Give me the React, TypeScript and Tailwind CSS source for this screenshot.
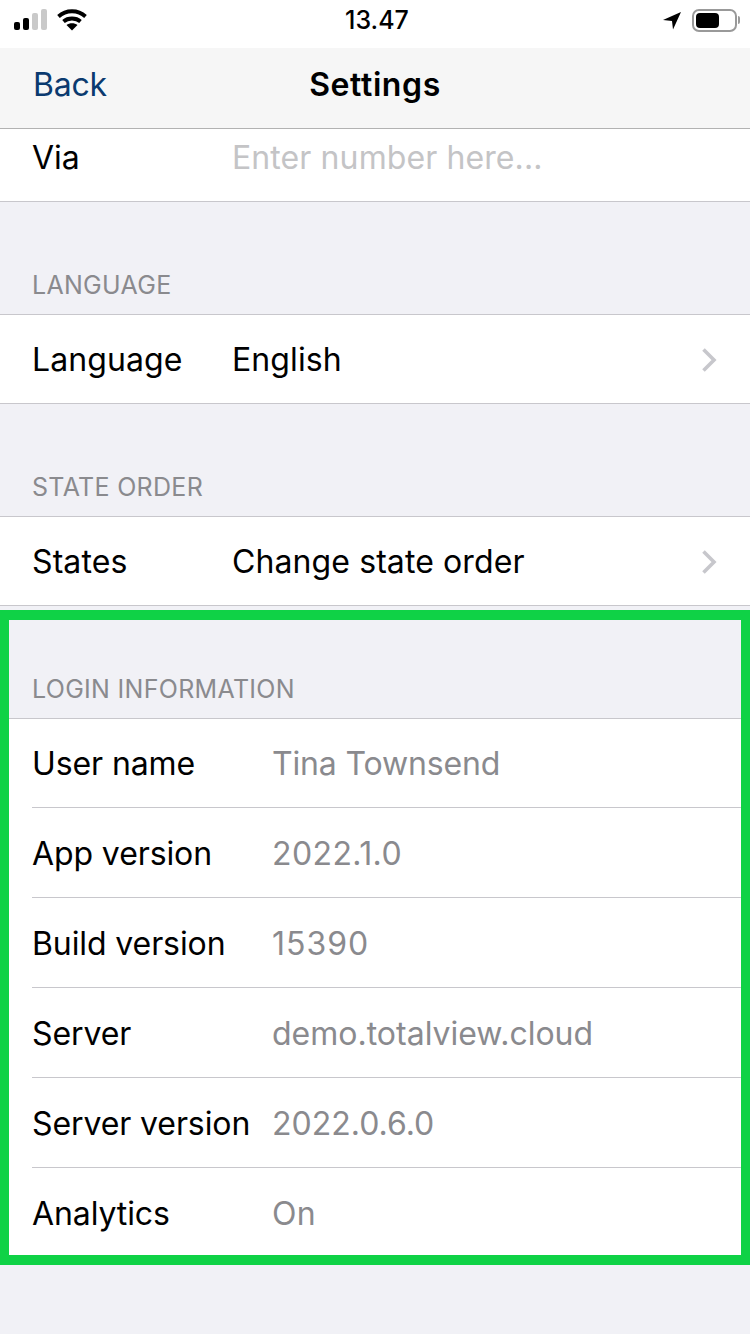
import React from 'react';

const font = { fontFamily: 'Inter, "Liberation Sans", sans-serif' };

const Chevron = () => (
    <svg width="16" height="26" viewBox="0 0 16 26" fill="none" className="shrink-0">
        <path d="M2.5 2.5 L13 13 L2.5 23.5" stroke="#c7c7cc" strokeWidth="3.6"/>
    </svg>
);

const SectionHeader = ({title}: { title: string }) => (
    <div className="flex items-end h-[113px] px-[32px] pb-[14px] border-b border-[#c8c7cc] text-[25px] leading-[30px] tracking-[0.3px] text-[#8a8a8e]">
        {title}
    </div>
);

const LinkRow = ({label, value}: { label: string, value: string }) => (
    <div className="flex items-center h-[89px] bg-white border-b border-[#c8c7cc] pl-[32px] pr-[33px] pt-[1px] text-[32px] text-black">
        <div className="w-[200px] tracking-[0.1px]">{label}</div>
        <div className="flex-1 tracking-[0.1px]">{value}</div>
        <Chevron/>
    </div>
);

const infoRows = [
    {label: 'User name', value: 'Tina Townsend', tracking: 'tracking-[-0.15px]'},
    {label: 'App version', value: '2022.1.0', tracking: 'tracking-[0.4px]'},
    {label: 'Build version', value: '15390', tracking: 'tracking-[1px]'},
    {label: 'Server', value: 'demo.totalview.cloud', tracking: 'tracking-[0px]'},
    {label: 'Server version', value: '2022.0.6.0', tracking: 'tracking-[0px]'},
    {label: 'Analytics', value: 'On', tracking: 'tracking-[0.4px]'},
];

const App = () => {
    return (
        <div className="relative w-[750px] h-[1334px] overflow-hidden bg-[#f1f1f6]" style={font}>
            <div className="flex items-center justify-between h-[48px] bg-white pl-[14px] pr-[10px] pb-[8px]">
                <div className="flex items-center gap-[9px] w-[200px]">
                    <svg width="34" height="22" viewBox="0 0 34 22">
                        <rect x="0" y="13" width="6" height="8" rx="2" fill="#000"/>
                        <rect x="9" y="9" width="6" height="12" rx="2" fill="#000"/>
                        <rect x="18" y="4" width="6" height="17" rx="2" fill="#c9c9c9"/>
                        <rect x="27" y="0" width="6" height="21" rx="2" fill="#c9c9c9"/>
                    </svg>
                    <svg width="30" height="22" viewBox="0 0 30 22" fill="none" stroke="#000" strokeWidth="3.8">
                        <path d="M1.5 7.5 C9 0.5 21 0.5 28.5 7.5"/>
                        <path d="M6.5 12.5 C11 8.5 19 8.5 23.5 12.5"/>
                        <path d="M15 21.5 L9.5 16 C12.5 13.5 17.5 13.5 20.5 16 Z" fill="#000" stroke="none"/>
                    </svg>
                </div>
                <div className="mt-[2px] text-[25px] font-medium tracking-[0px] text-black">13.47</div>
                <div className="flex items-center justify-end gap-[11px] w-[200px]">
                    <svg width="18" height="20" viewBox="0 0 18 20">
                        <path d="M18 2 L10 19.5 L9 11 L0 10 Z" fill="#000"/>
                    </svg>
                    <div className="flex items-center gap-[1px]">
                        <div className="flex items-center w-[45px] h-[23px] rounded-[7px] border-2 border-[#999999] p-[2px]">
                            <div className="w-[23px] h-full rounded-[4px] bg-black"/>
                        </div>
                        <div className="w-[2px] h-[8px] rounded-r-full bg-[#999999]"/>
                    </div>
                </div>
            </div>

            <div className="relative flex items-center justify-center h-[81px] pb-[6px] bg-[#f6f6f6] border-b border-[#b2b2b2]">
                <div className="absolute left-[33px] text-[32px] tracking-[-0.2px] text-[#0b3a6f]">Back</div>
                <div className="text-[32px] font-semibold tracking-[0.6px] text-black">Settings</div>
            </div>

            <div className="flex items-center h-[73px] bg-white border-b border-[#c8c7cc] pl-[32px] pb-[14px] text-[32px]">
                <div className="w-[200px] text-black">Via</div>
                <div className="tracking-[0.1px] text-[#c4c4c6]">Enter number here...</div>
            </div>

            <SectionHeader title="LANGUAGE"/>
            <LinkRow label="Language" value="English"/>
            <SectionHeader title="STATE ORDER"/>
            <LinkRow label="States" value="Change state order"/>
            <SectionHeader title="LOGIN INFORMATION"/>

            <div className="bg-white border-b border-[#c8c7cc]">
                {infoRows.map((row, index) => (
                    <div key={index} className="pl-[32px] text-[32px]">
                        <div className={`flex items-center ${index === 0 ? 'h-[89px] pt-[1px]' : 'h-[90px] pt-[2px]'} ${index < infoRows.length - 1 ? 'border-b border-[#c8c7cc]' : ''}`}>
                            <div className="w-[240px] whitespace-nowrap tracking-[-0.1px] text-black">{row.label}</div>
                            <div className={`text-[#8a8a8e] ${row.tracking}`}>{row.value}</div>
                        </div>
                    </div>
                ))}
            </div>

            <div className="absolute left-0 top-[610px] w-[750px] h-[655px] border-x-[9px] border-y-[10px] border-[#0fd246]"/>
        </div>
    );
};

export default App;
